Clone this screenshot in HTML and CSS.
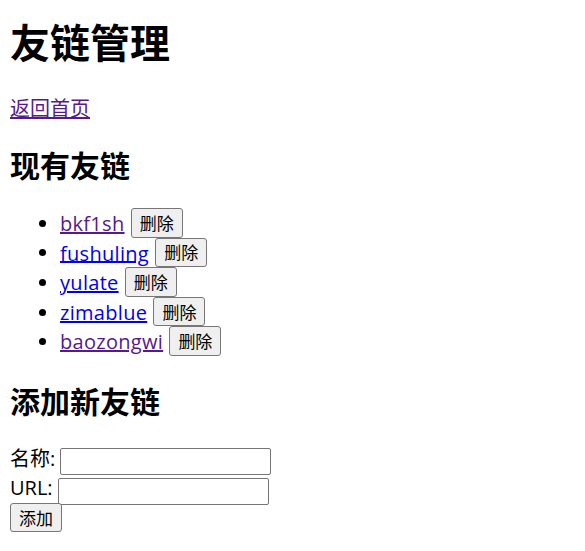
FILE: index.html
```html
<!DOCTYPE html>
<html lang="zh-CN">
<head>
<meta charset="utf-8">
<title>友链管理</title>
<link rel="stylesheet" href="styles.css">
</head>
<body>
<h1 class="title">友链管理</h1>
<a class="link visited" href="#">返回首页</a>
<h2 class="section">现有友链</h2>
<ul class="links">
  <li class="item"><a class="link visited" href="#">bkf1sh</a> <button class="btn del">删除</button></li>
  <li class="item"><a class="link" href="#">fushuling</a> <button class="btn del">删除</button></li>
  <li class="item"><a class="link" href="#">yulate</a> <button class="btn del">删除</button></li>
  <li class="item"><a class="link" href="#">zimablue</a> <button class="btn del">删除</button></li>
  <li class="item"><a class="link visited" href="#">baozongwi</a> <button class="btn del">删除</button></li>
</ul>
<h2 class="section">添加新友链</h2>
<form class="form">
  <div class="row">名称: <input class="field name" type="text"></div>
  <div class="row">URL: <input class="field url" type="text"></div>
  <div class="row"><button class="btn" type="button">添加</button></div>
</form>
</body>
</html>
```

FILE: styles.css
```css
html, body {
  background: #fff;
}
body {
  margin: 0 10px 10px;
  padding-top: 1px;
  font-family: "Open Sans", "Noto Sans CJK SC", sans-serif;
  font-size: 20px;
  line-height: 26px;
  color: #000;
}
.title {
  font-family: "Noto Sans CJK SC", sans-serif;
  font-size: 40px;
  line-height: 52px;
  font-weight: 700;
  margin: 14px 0 29px;
}
.section {
  font-family: "Noto Sans CJK SC", sans-serif;
  font-size: 30px;
  line-height: 39px;
  font-weight: 700;
  margin: 23px 0 24px;
}
.link {
  color: #0000ee;
  text-decoration: underline;
}
.visited {
  color: #551a8b;
}
.links {
  margin: 0 0 25px;
  padding-left: 50px;
}
.item {
  line-height: 29.6px;
  height: 29.6px;
}
.item .link {
  letter-spacing: 0.3px;
}
.btn {
  font-family: "Noto Sans CJK SC", sans-serif;
  font-size: 17px;
  line-height: 24px;
  height: 29.5px;
  padding: 0 8px;
  border: 1px solid #767676;
  border-radius: 3px;
  background: #efefef;
  color: #000;
  vertical-align: 1px;
}
.del {
  margin-left: 1px;
}
.form {
  margin: 0;
}
.row {
  line-height: 30px;
  height: 29.5px;
}
.field {
  height: 27px;
  box-sizing: border-box;
  width: 211px;
  border: 1px solid #767676;
  border-radius: 2px;
  padding: 0 3px;
  vertical-align: -1px;
  font-size: 16px;
}
```
